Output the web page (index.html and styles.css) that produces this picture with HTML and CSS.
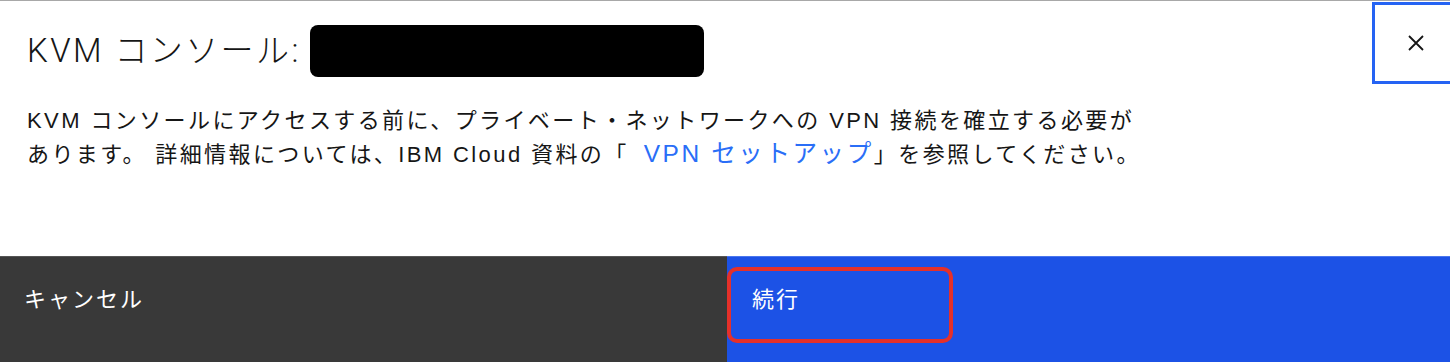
FILE: index.html
```html
<!DOCTYPE html>
<html lang="ja">
<head>
    <meta charset="UTF-8">
    <meta name="viewport" content="width=device-width, initial-scale=1.0">
    <title>KVM コンソール</title>
    <link rel="stylesheet" href="styles.css">
</head>
<body>
    <div class="modal">
        <div class="modal-header">
            <h2 class="modal-title">KVM コンソール:<span class="redacted"></span></h2>
            <button class="modal-close" type="button" aria-label="閉じる">
                <svg width="18" height="18" viewBox="0 0 18 18">
                    <path d="M2 2 L16 16 M16 2 L2 16" stroke="#161616" stroke-width="1.8" fill="none"/>
                </svg>
            </button>
        </div>
        <p class="modal-body">
            KVM コンソールにアクセスする前に、プライベート・ネットワークへの VPN 接続を確立する必要が<br>
            あります。 詳細情報については、IBM Cloud 資料の「<a href="#">VPN セットアップ</a>」を参照してください。
        </p>
        <div class="modal-footer">
            <button class="btn btn-secondary" type="button">キャンセル</button>
            <button class="btn btn-primary" type="button">続行<span class="highlight"></span></button>
        </div>
    </div>
</body>
</html>
```

FILE: styles.css
```css
body {
    margin: 0;
    font-family: "Liberation Sans", "Noto Sans CJK JP", sans-serif;
    color: #161616;
    background: #fff;
}
.modal {
    border-top: 1px solid #a8a8a8;
    height: 361px;
    display: flex;
    flex-direction: column;
}
.modal-header {
    display: flex;
    justify-content: space-between;
    align-items: flex-start;
}
.modal-title {
    margin: 24px 0 0 27px;
    display: flex;
    align-items: center;
    font-family: "Roboto", "Noto Sans CJK JP", sans-serif;
    font-weight: 300;
    font-size: 33px;
    line-height: 52px;
    letter-spacing: 2.4px;
}
.redacted {
    display: inline-block;
    width: 394px;
    height: 52px;
    margin-left: 9px;
    background: #000;
    border-radius: 8px;
}
.modal-close {
    margin-top: 1px;
    width: 78px;
    height: 82px;
    border: 3px solid #2563f3;
    border-right: none;
    background: #fff;
    display: flex;
    align-items: center;
    justify-content: center;
    padding: 0 0 0 6px;
    cursor: pointer;
}
.modal-body {
    margin: 20px 0 0 27px;
    font-size: 22px;
    line-height: 33px;
    letter-spacing: 2.4px;
}
.modal-body a {
    margin-left: 15px;
    font-size: 24.5px;
    letter-spacing: 2.6px;
    color: #2a6ef7;
    text-decoration: none;
}
.modal-footer {
    margin-top: auto;
    height: 106px;
    display: flex;
}
.btn {
    position: relative;
    border: none;
    margin: 0;
    font-family: "Liberation Sans", "Noto Sans CJK JP", sans-serif;
    font-size: 22px;
    line-height: 30px;
    letter-spacing: 2px;
    color: #fff;
    text-align: left;
    display: flex;
    align-items: flex-start;
    padding: 28px 24px;
    cursor: pointer;
}
.btn-secondary {
    width: 727px;
    background: #393939;
    border-top: 1px solid #555;
}
.btn-primary {
    flex: 1;
    background: #1c52e6;
    border-top: 1px solid #4a76ee;
    padding-left: 25px;
}
.highlight {
    position: absolute;
    left: 0;
    top: 10px;
    width: 218px;
    height: 68px;
    border: 4px solid #e5302a;
    border-radius: 10px;
    pointer-events: none;
}
```
